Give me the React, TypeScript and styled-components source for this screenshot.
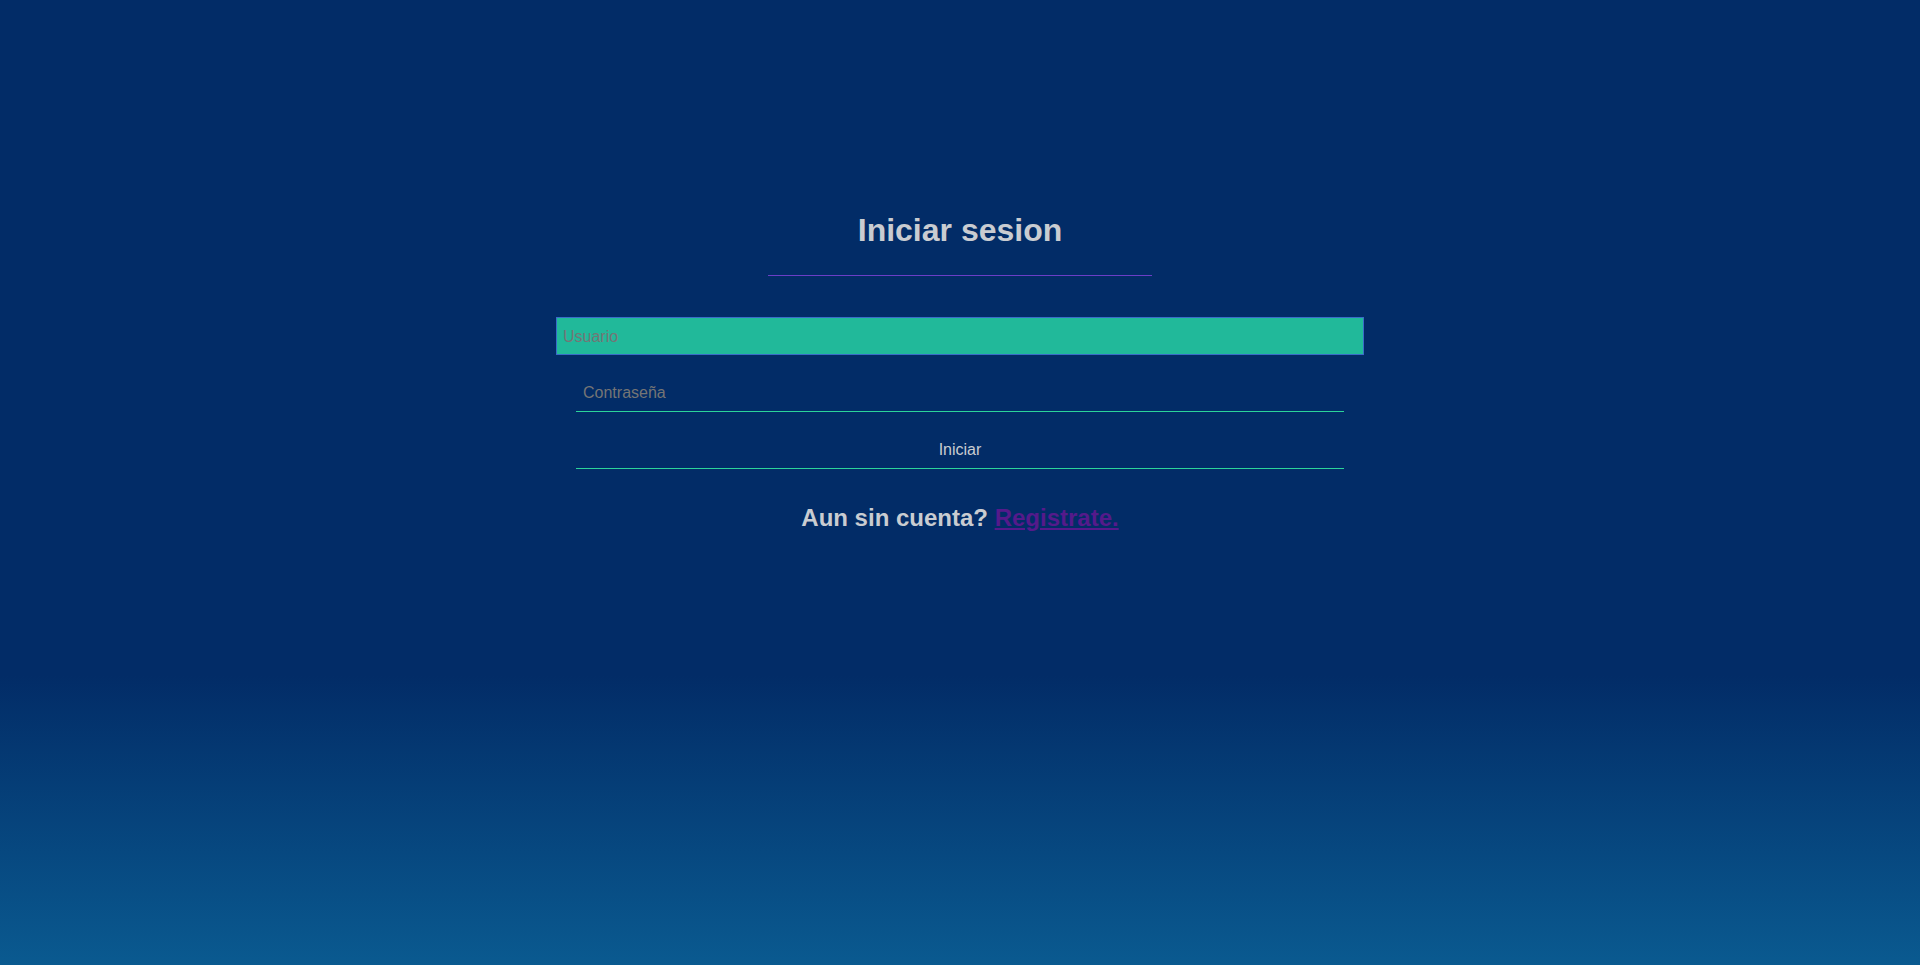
import React from "react";
import styled, { createGlobalStyle } from "styled-components";

const GlobalStyle = createGlobalStyle`
  html, body {
    margin: 0;
    padding: 0;
  }
  body {
    font-family: "Liberation Sans", Arial, sans-serif;
    background: linear-gradient(to bottom, #022c67 0%, #022c67 70%, #0a5a90 100%);
    min-height: 100vh;
  }
`;

const Page = styled.main`
  min-height: 100vh;
  display: flex;
  flex-direction: column;
  align-items: center;
  padding-top: 212px;
  box-sizing: border-box;
`;

const Form = styled.form`
  width: 40%;
  display: flex;
  flex-direction: column;
  align-items: center;
`;

const Title = styled.h1`
  margin: 0;
  font-size: 32px;
  line-height: 37px;
  font-weight: bold;
  color: #c9ccd1;
`;

const Divider = styled.div`
  width: 50%;
  height: 1px;
  background: #6b3ec6;
  margin: 26px 0 41px;
`;

const Field = styled.input`
  width: 100%;
  height: 37px;
  box-sizing: border-box;
  margin: 0 0 20px;
  padding: 0 7px;
  border: none;
  border-bottom: 1px solid #2bd49a;
  background: transparent;
  color: #ccc;
  font-family: "Liberation Sans", Arial, sans-serif;
  font-size: 16px;
  outline: none;

  &::placeholder {
    color: #757575;
  }

  &:focus {
    width: calc(100% + 40px);
    height: 38px;
    padding: 1px 6px 0;
    border: 1px solid #3a6cc8;
    background: #21b99a;
    caret-color: #8fb0c8;
  }
`;

const Submit = styled.button`
  width: 100%;
  height: 37px;
  box-sizing: border-box;
  margin: 0;
  padding: 0;
  border: none;
  border-bottom: 1px solid #2bd49a;
  background: transparent;
  color: #c9ccd1;
  font-family: "Liberation Sans", Arial, sans-serif;
  font-size: 16px;
  cursor: pointer;
`;

const Footer = styled.h2`
  margin: 35px 0 0;
  font-size: 24px;
  line-height: 28px;
  font-weight: bold;
  color: #c9ccd1;
`;

const SignUp = styled.a`
  color: #551a8b;
  text-decoration: underline;
`;

export default function App() {
  return (
    <>
      <GlobalStyle />
      <Page>
        <Form onSubmit={(e) => e.preventDefault()}>
          <Title>Iniciar sesion</Title>
          <Divider />
          <Field type="text" placeholder="Usuario" autoFocus />
          <Field type="password" placeholder="Contraseña" />
          <Submit type="submit">Iniciar</Submit>
          <Footer>
            Aun sin cuenta? <SignUp href="#">Registrate.</SignUp>
          </Footer>
        </Form>
      </Page>
    </>
  );
}
